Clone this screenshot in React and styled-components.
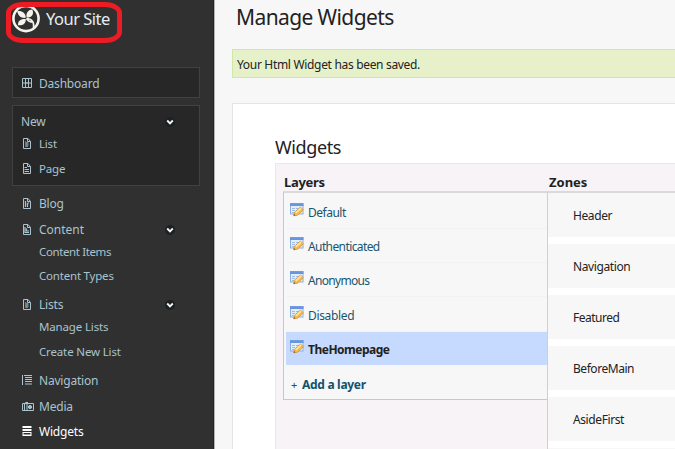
import React from "react";
import styled, { createGlobalStyle } from "styled-components";

const Global = createGlobalStyle`
  * { box-sizing: border-box; }
  html, body { margin: 0; height: 449px; overflow: hidden; }
  body { font-family: "Noto Sans", "Open Sans", sans-serif; font-size: 12px; background: #f7f7f7; color: #222; }
  h1, h2, h3, p, ul { margin: 0; padding: 0; font-weight: 400; }
  svg { display: block; flex: none; }
`;

const Page = styled.div`
  display: flex;
  width: 675px;
  height: 449px;
  overflow: hidden;
`;

const Sidebar = styled.nav`
  width: 215px;
  flex: none;
  background: #303030;
  border-right: 1px solid #b5b5b5;
  box-shadow: inset -1px 0 #222;
  color: #a9c3cf;
`;

const Brand = styled.header`
  position: relative;
  display: flex;
  align-items: center;
  height: 37px;
  padding-left: 12px;
`;

const BrandName = styled.span`
  margin-left: 6px;
  font-size: 16.5px;
  line-height: 20px;
  letter-spacing: -0.5px;
  color: #e3edf1;
  white-space: nowrap;
`;

const Marker = styled.div`
  position: absolute;
  left: 6px;
  top: 2px;
  width: 116px;
  height: 41px;
  border: 5px solid #ed1c24;
  border-radius: 17px / 11px;
`;

const MenuBox = styled.section`
  width: 188px;
  margin: ${(p) => p.$top}px 0 0 12px;
  height: ${(p) => p.$height}px;
  padding-top: ${(p) => p.$inset}px;
  border: 1px solid #414141;
  background: #272727;
`;

const Menu = styled.div`
  margin-left: 13px;
  width: 186px;
`;

const MenuRow = styled.div`
  display: flex;
  align-items: center;
  height: 22px;
  margin-top: ${(p) => p.$gap || 0}px;
  padding-left: ${(p) => (p.$plain ? 8 : 9)}px;
  padding-right: 24px;
  color: ${(p) => (p.$active ? "#fff" : "inherit")};
`;

const IconSlot = styled.span`
  width: 17px;
  flex: none;
  padding-bottom: 2px;
`;

const Label = styled.span`
  flex: 1;
  white-space: nowrap;
  line-height: 20px;
  font-size: ${(p) => p.$size || 12}px;
  letter-spacing: ${(p) => p.$track || 0}px;
`;

const Main = styled.main`
  flex: 1;
  min-width: 0;
  padding-left: 17px;
`;

const Title = styled.h1`
  height: 49px;
  padding: 2px 0 0 4px;
  font-size: 21px;
  line-height: 30px;
  letter-spacing: -0.6px;
  white-space: nowrap;
`;

const Message = styled.p`
  height: 29px;
  padding-left: 4px;
  border: 1px solid #d2e6a5;
  border-right: 0;
  background: #e6f1c9;
  line-height: 29px;
  letter-spacing: -0.32px;
`;

const Panel = styled.section`
  margin-top: 25px;
  height: 360px;
  padding: 31px 0 0 42px;
  border: 1px solid #e4e4e4;
  border-right: 0;
  background: #fff;
`;

const PanelTitle = styled.h2`
  height: 28px;
  font-size: 18px;
  line-height: 25px;
  letter-spacing: -0.4px;
`;

const Board = styled.div`
  display: grid;
  grid-template-columns: 264px 1fr;
  grid-template-rows: 27px 1fr;
  height: 300px;
  padding-left: 7px;
  border: 1px solid #ebe8eb;
  border-right: 0;
  background: #f7f3f7;
`;

const ColumnTitle = styled.h3`
  padding-left: ${(p) => p.$inset}px;
  font-size: 13px;
  line-height: 37px;
  font-weight: 700;
  letter-spacing: ${(p) => p.$track}px;
`;

const Layers = styled.div`
  height: 209px;
  border: 1px solid #c8c8ca;
  border-right: 0;
  border-top: 2px solid #dcd8dc;
  padding: 2px 0 0 2px;
  background: #f7f7f7;
`;

const LayerRow = styled.div`
  display: flex;
  align-items: center;
  gap: 4px;
  height: ${(p) => p.$height || 34}px;
  padding-left: 4px;
  padding-top: 3px;
  border-bottom: ${(p) => (p.$active ? "0" : "1px solid #f3f1f3")};
  background: ${(p) => (p.$active ? "#c6d9ff" : "transparent")};
  color: ${(p) => (p.$active ? "#222" : "#1a5570")};
  font-weight: ${(p) => (p.$active ? 700 : 400)};

  svg { margin-bottom: 6px; }
`;

const AddLayer = styled.div`
  display: flex;
  align-items: center;
  gap: 4px;
  height: 39px;
  padding-left: 5px;
  color: #10536e;
  font-weight: 700;
`;

const Plus = styled.span`
  font-size: 11px;
  font-weight: 400;
  width: 7px;
`;

const Zones = styled.div`
  display: flex;
  flex-direction: column;
  gap: 7px;
  overflow: hidden;
  border-left: 1px solid #cfcfd3;
  border-top: 2px solid #dcd8dc;
  background: #fff;
`;

const Zone = styled.div`
  display: flex;
  align-items: center;
  flex: none;
  height: 44px;
  padding: 2px 0 0 25px;
  background: #f7f7f7;
`;

const Logo = () => (
  <svg width="28" height="29" viewBox="0 0 28 29">
    <circle cx="14" cy="14.5" r="12.6" fill="none" stroke="#f4f4ec" strokeWidth="2.6" />
    <g fill="#f4f4ec">
      <path d="M13.800 13.800C9.500 14.500 6 12 5.200 7.200C10 6.600 13.600 9 13.800 13.800Z" />
      <path d="M14.800 13.500C13.400 9.500 15.800 5.800 20.300 5.400C22.400 10 19.800 13.600 14.800 13.500Z" />
      <path d="M13.800 15C14 19.600 11 21.800 6 21.300C5.600 17 8.500 14.600 13.800 15Z" />
    </g>
    <path d="M14.500 14.500C19.500 14.500 22.500 18 21.600 24M14.500 14.500C16 17 18.500 18.200 21 18.200" fill="none" stroke="#f4f4ec" strokeWidth="1.600" />
  </svg>
);

const sheetLines = {
  list: "M3 4H4M3 6H4M3 8H4M5 4V9M6.500 5H7M6.500 7H7",
  page: "M2.500 4.500H5M2.500 6.500H7M2.500 8.500H7",
  blog: "M3.500 3V9M5.500 5V9M5.500 5H7",
  content: "M3 3V8.500H7M4.500 4.500V7H7",
};

const MenuIcon = ({ kind }) => {
  const line = { fill: "none", stroke: "currentColor", strokeWidth: 1 };
  if (kind === "dashboard")
    return (
      <svg width="10" height="10" viewBox="0 0 10 10" {...line}>
        <path d="M.5.5H9.500V9.500H.5ZM3.500 .5V9.500M6.500 .5V9.500M.5 5H3.500M6.500 5H9.500" />
        <path d="M3.500 4.500H6.500V5.500H3.500Z" fill="currentColor" opacity=".7" />
      </svg>
    );
  if (kind === "navigation")
    return (
      <svg width="10" height="10" viewBox="0 0 10 10" {...line}>
        <path d="M.5 0V10M2 .5H10M3 2.500H10M3 4.500H10M3 6.500H10M3 9H10" />
      </svg>
    );
  if (kind === "media")
    return (
      <svg width="12" height="9" viewBox="0 0 12 9" {...line}>
        <path d="M.5 1.500H11.500V8.500H.5ZM2.500 1.500V8.500M3.500 1.500V.5H6" />
        <path d="M5 2V8.500" />
        <circle cx="8" cy="5" r="1.600" fill="currentColor" />
      </svg>
    );
  if (kind === "widgets")
    return (
      <svg width="10" height="10" viewBox="0 0 10 10" fill="currentColor">
        <path d="M.5 0H9.500V2H.5ZM.5 3H9.500V5H.5ZM.5 6H9.500V7H.5ZM.5 8.500H9.500V10H.5ZM.5 6H1.500V10H.5ZM8.500 6H9.500V10H8.500Z" />
      </svg>
    );
  return (
    <svg width="10" height="11" viewBox="0 0 10 11" {...line}>
      <path d="M1.500 .5H6L8.500 3.500V10.500H1.500ZM5.500 .5V3.500H8.500" />
      <path d={sheetLines[kind]} strokeWidth="1.200" />
    </svg>
  );
};

const Chevron = () => (
  <svg width="10" height="10" viewBox="0 0 10 10">
    <circle cx="5" cy="5" r="5" fill="#1d2023" />
    <path d="M2.200 3.500L5 6.300L7.800 3.500" fill="none" stroke="#f3f6f7" strokeWidth="1.900" />
  </svg>
);

const EditIcon = () => (
  <svg width="14" height="14" viewBox="0 0 14 14">
    <rect x=".5" y=".5" width="12.500" height="10.500" fill="#e3eefc" stroke="#8caede" />
    <path d="M0 .3H13.500V3H0Z" fill="#6795e2" />
    <path d="M2 5.500H5M6 5.500H9M2 7.500H5M6 7.500H8M2 9.500H4" stroke="#9dbde8" />
    <path d="M3.600 12.800L4.400 9.400L10.400 4L13.400 6.800L7.300 12.400Z" fill="#f9b940" stroke="#d38a30" strokeWidth=".6" />
    <path d="M5.800 9.800L11.100 5.200" stroke="#ffe79a" strokeWidth="1.600" />
    <path d="M3.600 12.800L4.100 11.100L5.400 12.500Z" fill="#6a4a30" />
  </svg>
);

const Item = ({ icon, text, gap, track = -0.2, size, arrow, active, plain }) => (
  <MenuRow $gap={gap} $active={active} $plain={plain}>
    {!plain && <IconSlot>{icon && <MenuIcon kind={icon} />}</IconSlot>}
    <Label $track={track} $size={size}>{text}</Label>
    {arrow && <Chevron />}
  </MenuRow>
);

const siteMenu = [
  { icon: "blog", text: "Blog", gap: 7 },
  { icon: "content", text: "Content", gap: 4, arrow: true, track: 0 },
  { text: "Content Items", size: 11.5, track: -0.38 },
  { text: "Content Types", gap: 2, size: 11.5, track: -0.2 },
  { icon: "list", text: "Lists", gap: 7, arrow: true },
  { text: "Manage Lists", size: 11.5, track: -0.15 },
  { text: "Create New List", gap: 3, size: 11.5, track: -0.15 },
  { icon: "navigation", text: "Navigation", gap: 7 },
  { icon: "media", text: "Media", gap: 4 },
  { icon: "widgets", text: "Widgets", gap: 3, active: true },
];

const layers = [
  { text: "Default", track: -0.5 },
  { text: "Authenticated", track: -0.6 },
  { text: "Anonymous", track: -0.7 },
  { text: "Disabled", height: 35, track: -0.35 },
  { text: "TheHomepage", height: 33, active: true, track: -0.5 },
];

const zones = [
  { text: "Header", track: -0.4 },
  { text: "Navigation", track: -0.4 },
  { text: "Featured", track: -0.5 },
  { text: "BeforeMain", track: -0.45 },
  { text: "AsideFirst", track: -0.4 },
];

export default function App() {
  return (
    <>
      <Global />
      <Page>
        <Sidebar>
          <Brand>
            <Logo />
            <BrandName>Your Site</BrandName>
            <Marker />
          </Brand>
          <MenuBox $top={30} $height={31} $inset={5}>
            <Item icon="dashboard" text="Dashboard" />
          </MenuBox>
          <MenuBox $top={7} $height={81} $inset={5}>
            <Item plain text="New" arrow />
            <Item icon="list" text="List" size={11.5} track={-0.2} />
            <Item icon="page" text="Page" gap={3} size={11.5} />
          </MenuBox>
          <Menu>
            {siteMenu.map((m) => <Item key={m.text} {...m} />)}
          </Menu>
        </Sidebar>
        <Main>
          <Title>Manage Widgets</Title>
          <Message>Your Html Widget has been saved.</Message>
          <Panel>
            <PanelTitle>Widgets</PanelTitle>
            <Board>
              <ColumnTitle $inset={1} $track={-0.3}>Layers</ColumnTitle>
              <ColumnTitle $inset={2} $track={0}>Zones</ColumnTitle>
              <Layers>
                {layers.map((l) => (
                  <LayerRow key={l.text} $active={l.active} $height={l.height}>
                    <EditIcon />
                    <Label $track={l.track}>{l.text}</Label>
                  </LayerRow>
                ))}
                <AddLayer><Plus>+</Plus><Label $track={-0.3}>Add a layer</Label></AddLayer>
              </Layers>
              <Zones>
                {zones.map((z) => (
                  <Zone key={z.text}><Label $track={z.track}>{z.text}</Label></Zone>
                ))}
                <Zone />
              </Zones>
            </Board>
          </Panel>
        </Main>
      </Page>
    </>
  );
}
